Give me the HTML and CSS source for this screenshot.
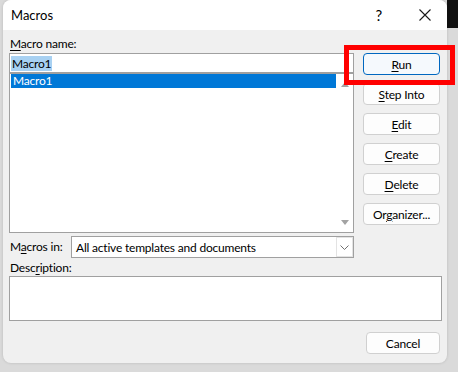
FILE: index.html
```html
<!DOCTYPE html>
<html lang="en">
<head>
  <meta charset="UTF-8">
  <title>Macros</title>
  <link rel="stylesheet" href="styles.css">
</head>
<body>

  <div class="window">
    <div class="titlebar">
      <span class="title">Macros</span>
      <span class="help">?</span>
      <svg class="close" width="12" height="12" viewBox="0 0 12 12">
        <path d="M0.5 0.5 L11.5 11.5 M11.5 0.5 L0.5 11.5" stroke="#1a1a1a" stroke-width="1.1" fill="none"/>
      </svg>
    </div>

    <div class="content">
      <div class="top-row">
        <div class="left-col">
          <div class="label"><u>M</u>acro name:</div>
          <div class="name-input"><span class="selected-text">Macro1</span></div>
          <div class="macro-list">
            <div class="list-items">
              <div class="list-item">Macro1</div>
            </div>
            <div class="scrollbar">
              <span class="arrow-up"></span>
              <span class="arrow-down"></span>
            </div>
          </div>
          <div class="macros-in">
            <div class="label in-label">M<u>a</u>cros in:</div>
            <div class="select">
              <span class="select-text">All active templates and documents</span>
              <span class="select-btn">
                <svg width="9" height="5" viewBox="0 0 9 5">
                  <path d="M0.5 0.5 L4.5 4.5 L8.5 0.5" stroke="#707070" stroke-width="1" fill="none"/>
                </svg>
              </span>
            </div>
          </div>
        </div>

        <div class="buttons">
          <button class="btn btn-default"><u>R</u>un</button>
          <button class="btn"><u>S</u>tep Into</button>
          <button class="btn"><u>E</u>dit</button>
          <button class="btn"><u>C</u>reate</button>
          <button class="btn"><u>D</u>elete</button>
          <button class="btn">Or<u>g</u>anizer...</button>
        </div>
      </div>

      <div class="label desc-label">Desc<u>r</u>iption:</div>
      <div class="description"></div>

      <div class="footer">
        <button class="btn btn-cancel">Cancel</button>
      </div>
    </div>
  </div>

  <div class="highlight"></div>

</body>
</html>
```

FILE: styles.css
```css
body {
  margin: 0;
  font-family: Lato, 'Segoe UI', sans-serif;
  font-size: 12px;
  letter-spacing: -0.2px;
  color: #000;
  background: linear-gradient(#111, #111) no-repeat right top / 11px 28px, #dadada;
  height: 372px;
  overflow: hidden;
}

.window {
  margin-left: 3px;
  width: 444px;
  height: 363px;
  background: #f0f0f0;
  border-radius: 8px;
  overflow: hidden;
  box-shadow: 0 0 3px rgba(0, 0, 0, 0.15);
}

.titlebar {
  height: 30px;
  background: #fff;
  display: flex;
  align-items: center;
  padding-left: 8px;
}

.title {
  font-size: 13px;
  letter-spacing: 0;
  flex: 1;
}

.help {
  font-size: 15px;
  margin-right: 37px;
}

.close {
  margin-right: 16px;
}

.content {
  padding: 6px 5px 0 6px;
}

.top-row {
  display: flex;
  gap: 9px;
}

.left-col {
  width: 345px;
}

.label {
  height: 16px;
  line-height: 16px;
  padding-left: 1px;
}

.label u {
  text-underline-offset: 2px;
}

.name-input {
  margin-top: 1px;
  height: 18px;
  border: 1px solid #a0a0a0;
  background: #fff;
  padding-left: 1px;
  display: flex;
  align-items: center;
}

.selected-text {
  background: #a8d1f2;
  line-height: 15px;
  padding: 0 1px;
}

.macro-list {
  height: 158px;
  border: 1px solid #a0a0a0;
  background: #fff;
  display: flex;
}

.list-items {
  flex: 1;
  padding-left: 1px;
}

.list-item {
  height: 14px;
  line-height: 14px;
  background: #0078d7;
  color: #fff;
  padding-left: 2px;
}

.scrollbar {
  width: 17px;
  display: flex;
  flex-direction: column;
  justify-content: space-between;
  align-items: center;
  padding: 8px 0 7px;
}

.arrow-up,
.arrow-down {
  width: 0;
  height: 0;
  border-left: 4px solid transparent;
  border-right: 4px solid transparent;
}

.arrow-up {
  border-bottom: 5px solid #a3a3a3;
}

.arrow-down {
  border-top: 5px solid #a3a3a3;
}

.macros-in {
  display: flex;
  align-items: center;
  margin-top: 3px;
}

.in-label {
  width: 61px;
}

.select {
  width: 281px;
  height: 20px;
  border: 1px solid #a0a0a0;
  background: #fff;
  display: flex;
  align-items: center;
}

.select-text {
  flex: 1;
  padding-left: 4px;
}

.select-btn {
  width: 15px;
  height: 18px;
  border: 1px solid #e3e3e3;
  display: flex;
  align-items: center;
  justify-content: center;
}

.buttons {
  margin-top: 17px;
  display: flex;
  flex-direction: column;
  gap: 8px;
}

.btn {
  width: 77px;
  height: 22px;
  padding: 0;
  font-family: inherit;
  font-size: 12px;
  letter-spacing: -0.2px;
  color: #000;
  background: #fdfdfd;
  border: 1px solid #d0d0d0;
  border-radius: 4px;
}

.btn u {
  text-underline-offset: 2px;
}

.btn-default {
  background: #f5f9fd;
  border-color: #0067c0;
}

.desc-label {
  margin-top: 2px;
}

.description {
  height: 43px;
  border: 1px solid #a0a0a0;
  background: #fff;
}

.footer {
  display: flex;
  justify-content: flex-end;
  margin-top: 11px;
  padding-right: 2px;
}

.btn-cancel {
  width: 74px;
}

.highlight {
  position: absolute;
  left: 344px;
  top: 45px;
  width: 101px;
  height: 30px;
  border: 5px solid #ff0000;
}
```
